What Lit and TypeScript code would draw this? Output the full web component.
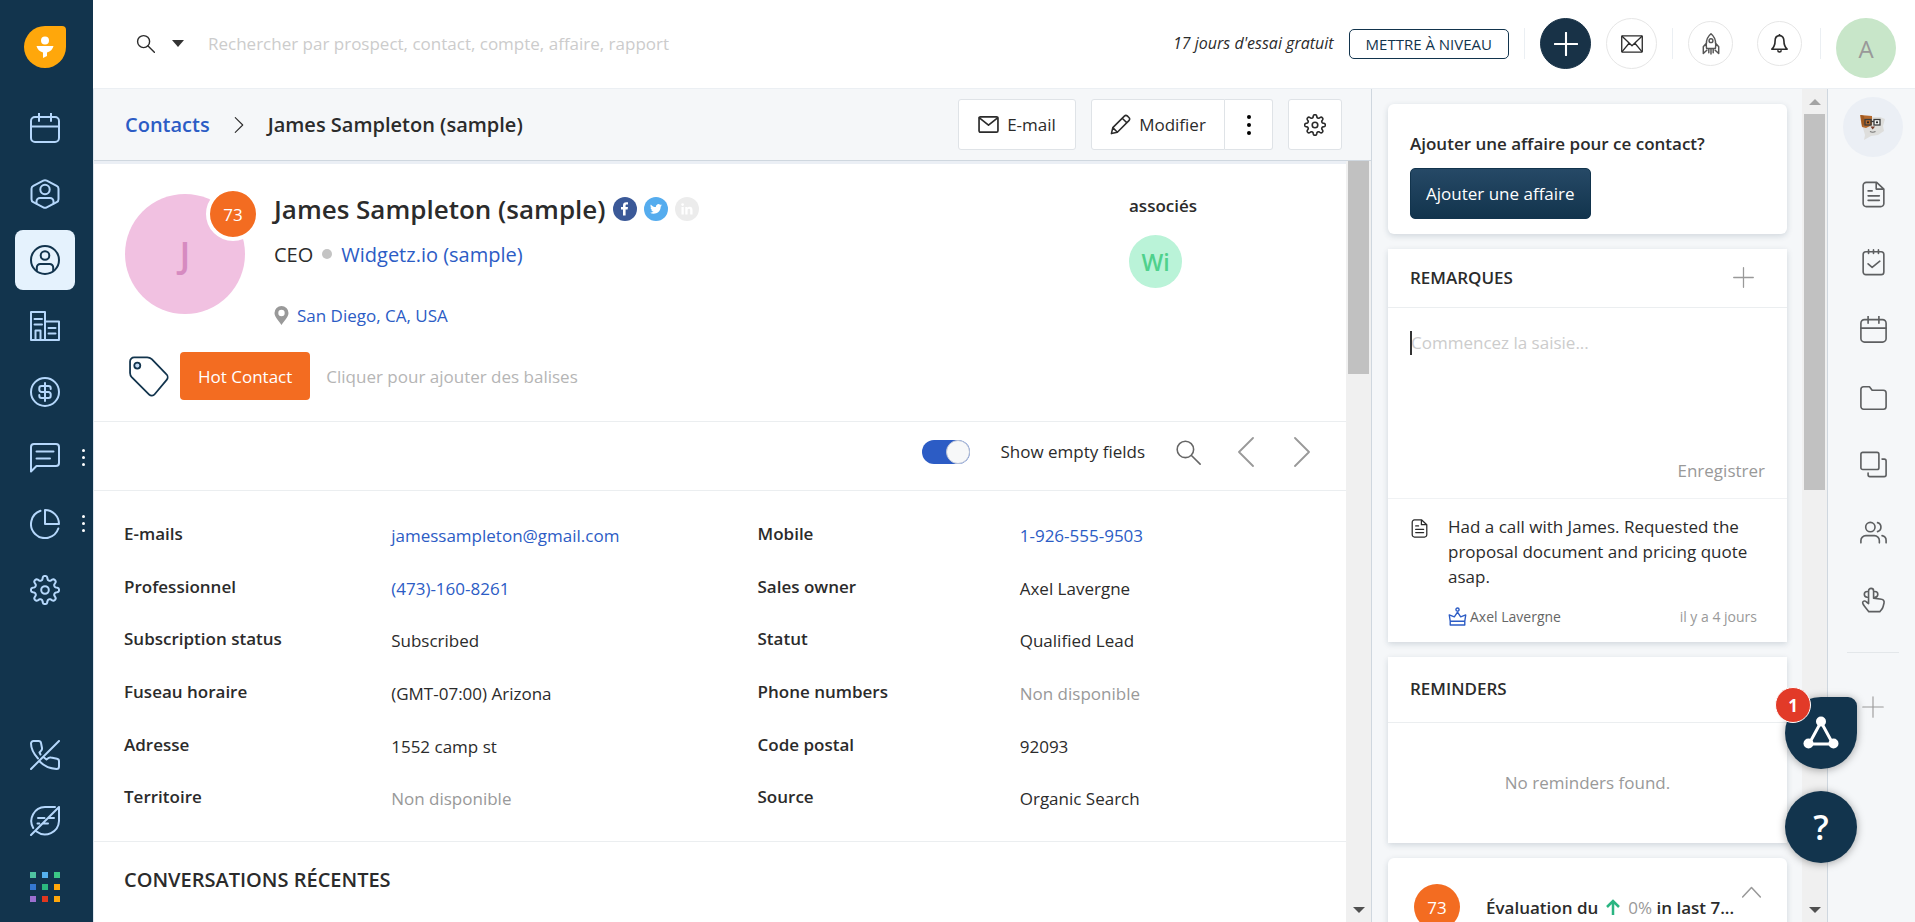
import { LitElement, html, svg, css, TemplateResult, SVGTemplateResult } from "lit";
import { customElement, state } from "lit/decorators.js";
import { classMap } from "lit/directives/class-map.js";

/* Eight-lobed cog outline on a 30 unit grid. */
function cogPath(mid: number, amp: number): string {
  const pts: string[] = [];
  for (let i = 0; i < 160; i++) {
    const t = (i / 160) * Math.PI * 2;
    const wave = Math.tanh(1.8 * Math.cos(8 * t)) / Math.tanh(1.8);
    const r = mid + amp * wave;
    pts.push(`${(15 + r * Math.sin(t)).toFixed(2)} ${(15 - r * Math.cos(t)).toFixed(2)}`);
  }
  return `M${pts.join("L")}Z`;
}

const COG = cogPath(12.1, 1.9);

const ICONS: Record<string, SVGTemplateResult> = {
  calendar: svg`<rect x="1" y="4" width="28" height="25" rx="4"/><path d="M1 13.500h28M9 0v8M21 0v8"/>`,
  lead: svg`<path d="M13.300 1.600a3.600 3.600 0 0 1 3.400 0l10 5.200a3.400 3.400 0 0 1 1.800 3v10.400a3.400 3.400 0 0 1-1.800 3l-10 5.200a3.600 3.600 0 0 1-3.400 0l-10-5.200a3.400 3.400 0 0 1-1.800-3V9.800a3.400 3.400 0 0 1 1.800-3z"/><circle cx="15" cy="10.500" r="4.700"/><path d="M6.500 24.500V22.500a3.500 3.500 0 0 1 3.500-3.500h10a3.500 3.500 0 0 1 3.500 3.500v2"/>`,
  contact: svg`<circle cx="15" cy="15" r="14"/><circle cx="15" cy="10.500" r="4.300"/><path d="M6.800 26v-3.500a3.500 3.500 0 0 1 3.500-3.500h9.400a3.500 3.500 0 0 1 3.500 3.500V26"/>`,
  account: svg`<path d="M1 29V1h14v28M15 10.500h14V29H1M4.500 8h7.500M4.500 13.500h7.500M5.500 29v-9.500h5V29M18.500 17h7M18.500 22.500h7"/>`,
  deal: svg`<circle cx="15" cy="15" r="14"/><path d="M15 6v18M20.700 12v-.700A2.300 2.300 0 0 0 18.400 9h-6.800a2.300 2.300 0 0 0-2.300 2.300v1.400A2.300 2.300 0 0 0 11.600 15h6.800a2.300 2.300 0 0 1 2.300 2.300v1.400a2.300 2.300 0 0 1-2.300 2.300h-6.800a2.300 2.300 0 0 1-2.300-2.300V18"/>`,
  chat: svg`<path d="M1 28.500V4a3 3 0 0 1 3-3h22a3 3 0 0 1 3 3v16a3 3 0 0 1-3 3H6.500zM6.500 8.500h17M6.500 15.500H20"/>`,
  pie: svg`<path d="M10.500 1.800A14 14 0 1 0 28.300 19.500M15 1v14h14A14 14 0 0 0 15 1z"/>`,
  cog: svg`<path d=${COG}/><circle cx="15" cy="15" r="3.800"/>`,
  phoneOff: svg`<path d="M1 29L29 1M8 18.500C3.500 13.500 1 8.500 1 3.500A2.500 2.500 0 0 1 3.500 1h5A2.500 2.500 0 0 1 11 3l1 5a3 3 0 0 1-1 2.800L9.500 12.500l1 2M14 17.500l2.500 2 2-1.500a3 3 0 0 1 2.500-.500l6 1.300a2.500 2.500 0 0 1 2 2.400v5.300A2.500 2.500 0 0 1 26.500 29C20 28.500 14 26 10 21.800"/>`,
  leafOff: svg`<path d="M1 29L29 1v14A14 14 0 0 1 6.500 25.500M25 1H15A14 14 0 0 0 3.200 22M8 12h6.500M19 12h5M7.500 17.500h1.800M12.500 17.500h5.500"/>`,
  note: svg`<path d="M7 1.500h11.500L26.500 9v16a3.500 3.500 0 0 1-3.500 3.500H7A3.500 3.500 0 0 1 3.500 25V5A3.500 3.500 0 0 1 7 1.500zM18 1.500V9h8.500M9 11h4.500M9 16.500h12.500M9 21.500h12.500"/>`,
  task: svg`<rect x="3.500" y="3" width="23" height="25.500" rx="3"/><path d="M9.500 1v4M15 1v4M20.500 1v4M9 16.500l4.500 4 8.500-7"/>`,
  folder: svg`<path d="M1 6a3 3 0 0 1 3-3h6.500l3 4H26a3 3 0 0 1 3 3v15a3 3 0 0 1-3 3H4a3 3 0 0 1-3-3z"/>`,
  copy: svg`<rect x="1" y="1.500" width="20" height="19" rx="2"/><path d="M24.500 9H27a2 2 0 0 1 2 2v15.500a2 2 0 0 1-2 2H11a2 2 0 0 1-2-2V24.500"/>`,
  people: svg`<circle cx="11.500" cy="9" r="5.200"/><path d="M1 26.500V24a5.500 5.500 0 0 1 5.500-5.500H16a5.500 5.500 0 0 1 5.500 5.500v2.500M19.500 4a5.200 5.200 0 0 1 0 10M24.500 18.500A5.500 5.500 0 0 1 29 24v2.500"/>`,
  touch: svg`<path d="M9.500 19.500V5.500a2.800 2.800 0 0 1 5.600 0v8l8.900 1.300a3.200 3.200 0 0 1 2.700 4l-1 4a8 8 0 0 1-2 3.700l-1.700 2H9.800L5 22.500c-1.800-2.300-2.600-4.300-1.500-5.300s2.700-.5 3.700.6zM8 6.100a3.200 3.200 0 1 0 0 6.400M16.600 6.100a3.200 3.200 0 1 1 0 6.400"/>`,
  search: svg`<circle cx="12" cy="12" r="9.500"/><path d="M19 19l10 10"/>`,
  mail: svg`<rect x="1.500" y="4" width="27" height="22" rx="2"/><path d="M2 5.500l13 10.500L28 5.500"/>`,
  letter: svg`<rect x="1" y="4" width="28" height="22" rx="1"/><path d="M1.500 4.500l13.500 13L28.500 4.500M1.500 25.500l9.500-11.500M28.500 25.500l-9.500-11.500"/>`,
  pencil: svg`<path d="M2 28l2-8.500L20.500 3a3.200 3.200 0 0 1 4.500 0l2 2a3.200 3.200 0 0 1 0 4.500L10.500 26zM17.500 6l6.500 6.500M4 19.500l6.500 6.500"/>`,
  rocket: svg`<path d="M9 21C7.500 12 10 5 15 1c5 4 7.500 11 6 20zM9 13.500l-4.500 5.300V28l4.800-4.500M21 13.500l4.500 5.300V28l-4.800-4.500M12 21.500V27M15 21.500V28.500M18 21.500V27"/><circle cx="15" cy="10.500" r="2.600"/>`,
  bell: svg`<path d="M15 2.500c-5 0-7 4-7 8.500 0 6-2 10-5 13h24c-3-3-5-7-5-13 0-4.500-2-8.500-7-8.500zM15 .500v2M12.500 26.500a2.500 2 0 0 0 5 0"/>`,
  plus: svg`<path d="M15 1v28M1 15h28"/>`,
  left: svg`<path d="M22 1L8 15l14 14"/>`,
  right: svg`<path d="M8 1l14 14L8 29"/>`,
  up: svg`<path d="M1 22L15 7l14 15"/>`,
  tag: svg`<path d="M1.500 4a3 3 0 0 1 3-3h9.500a5 5 0 0 1 3.400 1.300L28 13.300a3 3 0 0 1 .3 4.200L19.500 28a2.700 2.700 0 0 1-4 .2L2.700 15.400A4.500 4.500 0 0 1 1.500 12.400z"/><circle cx="6.800" cy="7" r="2.200" fill="#c5dcf5"/>`,
  crown: svg`<path d="M3.500 28.500v-6h23v6zM3.500 22.500L2 12.500l8 3L15 8l5 7.500 8-3-1.500 10"/><circle cx="15" cy="4" r="2.500"/>`,
};

function icon(name: string, size: number, weight = 2): TemplateResult {
  return html`<svg width=${size} height=${size} viewBox="0 0 30 30" fill="none" stroke="currentColor"
    stroke-width=${weight} stroke-linecap="round" stroke-linejoin="round" aria-hidden="true">${ICONS[name]}</svg>`;
}

interface Field {
  label: string;
  value: string;
  kind?: "link" | "empty";
}

const NAV = [
  { icon: "calendar", label: "Agenda" },
  { icon: "lead", label: "Prospects" },
  { icon: "contact", label: "Contacts", active: true },
  { icon: "account", label: "Comptes" },
  { icon: "deal", label: "Affaires" },
  { icon: "chat", label: "Conversations", more: true },
  { icon: "pie", label: "Rapports", more: true },
  { icon: "cog", label: "Configuration" },
];

const RAIL = ["note", "task", "calendar", "folder", "copy", "people", "touch"];

const APP_COLORS = [
  "#4fc3a1", "#55b1ee", "#3cc786",
  "#3578d0", "#2cb87f", "#ffa70b",
  "#9b6fd0", "#e0371f", "#ffa70b",
];

const FIELDS: Field[] = [
  { label: "E-mails", value: "jamessampleton@gmail.com", kind: "link" },
  { label: "Mobile", value: "1-926-555-9503", kind: "link" },
  { label: "Professionnel", value: "(473)-160-8261", kind: "link" },
  { label: "Sales owner", value: "Axel Lavergne" },
  { label: "Subscription status", value: "Subscribed" },
  { label: "Statut", value: "Qualified Lead" },
  { label: "Fuseau horaire", value: "(GMT-07:00) Arizona" },
  { label: "Phone numbers", value: "Non disponible", kind: "empty" },
  { label: "Adresse", value: "1552 camp st" },
  { label: "Code postal", value: "92093" },
  { label: "Territoire", value: "Non disponible", kind: "empty" },
  { label: "Source", value: "Organic Search" },
];

const shared = css`
  * { box-sizing: border-box; }
  svg { display: block; flex: none; }
  a { color: #2c5cc5; text-decoration: none; }
  button {
    font: inherit;
    color: inherit;
    background: none;
    border: 0;
    padding: 0;
    cursor: pointer;
  }
  h1, h2, p, dl, dt, dd { margin: 0; font-size: inherit; font-weight: inherit; }
`;

@customElement("side-nav")
export class SideNav extends LitElement {
  static styles = [shared, css`
    :host { display: flex; flex: none; width: 93px; background: #12344d; }
    nav { flex: 1; display: flex; flex-direction: column; align-items: center; padding: 26px 3px 5px 0; gap: 6px; color: #b5d7fb; }
    .logo { margin-bottom: 24px; }
    .item { position: relative; width: 60px; height: 60px; display: grid; place-items: center; color: inherit; border-radius: 8px; }
    .active { background: #e5f2fd; color: #12344d; }
    .spacer { flex: 1; }
    .more { position: absolute; right: -10px; top: 21px; display: grid; gap: 4px; }
    .more i { width: 3px; height: 3px; border-radius: 50%; background: #fff; }
  `];

  render() {
    return html`<nav aria-label="Principal">
      <svg class="logo" width="42" height="42" viewBox="0 0 42 42" aria-hidden="true">
        <path d="M21 0h17a4 4 0 0 1 4 4v17A21 21 0 1 1 21 0z" fill="#ffa70b"/>
        <circle cx="21" cy="14.500" r="4" fill="#fff"/>
        <path d="M12.500 20h17a9 9 0 0 1-6.500 6.500v3.500l-4 2v-5.500a9 9 0 0 1-6.500-6.500z" fill="#fff"/>
      </svg>
      ${NAV.map((n) => html`<a href="#" class=${classMap({ item: true, active: !!n.active })} aria-label=${n.label}>
        ${icon(n.icon, 30)}
        ${n.more ? html`<span class="more"><i></i><i></i><i></i></span>` : ""}
      </a>`)}
      <div class="spacer"></div>
      <a href="#" class="item" aria-label="Téléphone">${icon("phoneOff", 30)}</a>
      <a href="#" class="item" aria-label="Freddy">${icon("leafOff", 30)}</a>
      <a href="#" class="item" aria-label="Applications">
        <svg width="30" height="30" viewBox="0 0 30 30" aria-hidden="true">
          ${APP_COLORS.map((c, i) => svg`<rect x=${(i % 3) * 12} y=${Math.floor(i / 3) * 12} width="6" height="6" fill=${c}/>`)}
        </svg>
      </a>
    </nav>`;
  }
}

@customElement("top-bar")
export class TopBar extends LitElement {
  static styles = [shared, css`
    :host { display: flex; align-items: center; flex: none; height: 89px; padding: 0 19px 1px 43px; background: #fff; border-bottom: 1px solid #ebeff3; }
    .search { flex: 1; display: flex; align-items: center; }
    .caret { margin: 0 24px 0 17px; border: 6px solid transparent; border-top: 7px solid #333; border-bottom: 0; }
    input { flex: 1; min-width: 0; border: 0; outline: 0; padding: 0; height: 30px; font: inherit; font-size: 17px; background: none; }
    input::placeholder { color: #ccc; opacity: 1; }
    .trial { font-style: italic; font-size: 16px; line-height: 28px; padding-bottom: 2px; margin-right: 15px; }
    .upgrade { height: 30px; padding: 0 16px; border: 1px solid #12344d; border-radius: 5px; font-size: 15px; color: #12344d; }
    .rule { width: 1px; height: 31px; background: #ebeff3; margin: 0 15px; }
    .last { margin-left: 18px; }
    .round { width: 51px; height: 51px; border-radius: 50%; border: 1px solid #e6e6e6; display: grid; place-items: center; }
    .add { background: #183247; border-color: #183247; color: #fff; margin-right: 15px; }
    .small { width: 45px; height: 45px; }
    .rocket { color: #555; margin-right: 24px; }
    .avatar { width: 60px; height: 60px; border-radius: 50%; background: #c8e6c9; color: #999; font-size: 24px; display: grid; place-items: center; align-self: flex-start; margin-top: 18px; }
  `];

  render() {
    return html`
      <div class="search">
        ${icon("search", 19, 2.2)}
        <button class="caret" aria-label="Filtrer la recherche"></button>
        <input type="search" aria-label="Recherche" placeholder="Rechercher par prospect, contact, compte, affaire, rapport">
      </div>
      <span class="trial">17 jours d'essai gratuit</span>
      <button class="upgrade">METTRE À NIVEAU</button>
      <span class="rule"></span>
      <button class="round add" aria-label="Ajouter">${icon("plus", 24, 2.6)}</button>
      <button class="round" aria-label="E-mail">${icon("letter", 22, 1.8)}</button>
      <span class="rule"></span>
      <button class="round small rocket" aria-label="Nouveautés">${icon("rocket", 22, 2)}</button>
      <button class="round small" aria-label="Notifications">${icon("bell", 19, 2.6)}</button>
      <span class="rule last"></span>
      <button class="avatar" aria-label="Compte">A</button>`;
  }
}

@customElement("scroll-track")
export class ScrollTrack extends LitElement {
  static properties = { up: { type: Boolean }, share: { type: Number } };
  declare up: boolean;
  declare share: number;

  static styles = css`
    :host { display: flex; flex-direction: column; flex: none; width: 25px; background: #f0f0f0; padding: 0 2px; }
    .body { flex: 1; min-height: 0; }
    .thumb { background: #c1c1c1; }
    .arrow { height: 25px; display: grid; place-items: center; }
    .top { border: 6px solid transparent; border-bottom-color: #a3a3a3; border-top: 0; }
    .down { border: 6px solid transparent; border-top-color: #505050; border-bottom: 0; }
  `;

  render() {
    return html`
      ${this.up ? html`<div class="arrow"><span class="top"></span></div>` : ""}
      <div class="body"><div class="thumb" style="height:${this.share}%"></div></div>
      <div class="arrow"><span class="down"></span></div>`;
  }
}

@customElement("contact-view")
export class ContactView extends LitElement {
  @state() private showEmpty = true;

  static styles = [shared, css`
    :host { flex: 1; min-width: 0; display: flex; flex-direction: column; border-left: 1px solid #dfe7ef; border-right: 1px solid #cfd7df; background: #fff; }
    .crumbs { flex: none; height: 72px; display: flex; align-items: center; padding: 0 29px 0 31px; background: #f5f7f9; border-bottom: 1px solid #cfd7df; font-size: 20px; font-weight: 600; }
    .crumbs .sep { margin: 0 21px; }
    .crumbs .here { flex: 1; }
    .btn { height: 51px; display: flex; align-items: center; justify-content: center; gap: 8px; background: #fff; border: 1px solid #dfe3e7; border-radius: 3px; font-size: 17px; font-weight: 400; }
    .mailto { width: 118px; margin-right: 15px; }
    .edit { width: 134px; border-radius: 3px 0 0 3px; }
    .dots { width: 48px; border-left: 0; border-radius: 0 3px 3px 0; margin-right: 15px; }
    .gear { width: 54px; }
    .scroll { flex: 1; min-height: 0; display: flex; }
    .content { flex: 1; min-width: 0; overflow: hidden; border-top: 3px solid #ebeff5; }
    .profile { display: grid; grid-template-columns: 149px 1fr 217px; padding: 30px 0 0 31px; height: 188px; }
    .face { position: relative; width: 120px; height: 120px; border-radius: 50%; background: #f1c1e1; display: grid; place-items: center; color: #d68bc0; font-size: 36px; font-weight: 600; }
    .score { position: absolute; right: -15px; top: -7px; width: 54px; height: 54px; border-radius: 50%; border: 4px solid #fff; background: #f36c21; color: #fff; font-size: 17px; font-weight: 400; display: grid; place-items: center; }
    .name { display: flex; align-items: center; gap: 7px; height: 30px; font-size: 26px; font-weight: 600; }
    .job { display: flex; align-items: center; gap: 9px; height: 30px; margin-top: 15px; font-size: 20px; }
    .job i { width: 10px; height: 10px; border-radius: 50%; background: #c4c4c4; }
    .place { display: flex; align-items: center; gap: 8px; height: 30px; margin-top: 31px; font-size: 17px; }
    .linked { font-size: 17px; font-weight: 600; line-height: 24px; }
    .linked .wi { width: 53px; height: 53px; margin-top: 17px; border-radius: 50%; background: #baf3d8; color: #4fd18c; font-size: 23px; display: grid; place-items: center; }
    .tags { display: flex; align-items: center; padding: 0 0 21px 34px; height: 70px; border-bottom: 1px solid #ebeef0; font-size: 17px; color: #b5b5b5; }
    .tags svg { color: #12344d; margin-right: 11px; }
    .hot { height: 48px; display: flex; align-items: center; padding: 0 18px; border-radius: 4px; background: #f36c21; color: #fff; margin-right: 16px; }
    .tools { display: flex; align-items: center; justify-content: flex-end; height: 69px; padding: 0 29px 9px 0; border-bottom: 1px solid #ebeef0; font-size: 17px; }
    .toggle { appearance: none; width: 48px; height: 24px; margin: 0 30px 0 0; border-radius: 12px; background: #2c5cc5; position: relative; }
    .toggle::after { content: ""; position: absolute; top: 0; right: 0; width: 24px; height: 24px; border-radius: 50%; background: #f7f8f9; border: 1px solid #bcc4d6; box-sizing: border-box; }
    .toggle:not(:checked) { background: #cfd7df; }
    .toggle:not(:checked)::after { right: 24px; }
    .tools label { margin-right: 30px; }
    .tools button { color: #999; }
    .tools .find { color: #666; margin-right: 30px; }
    .tools .prev { margin-right: 26px; }
    .fields { display: grid; grid-template-columns: 267fr 366fr 262fr 326fr; grid-auto-rows: 1fr; height: 351px; padding: 30px 0 4px 30px; border-bottom: 1px solid #ebeef0; font-size: 17px; line-height: 26px; }
    .fields dt { font-weight: 600; }
    .fields dd { padding-top: 2px; }
    .empty { color: #999; }
    .recent { padding: 22px 0 0 30px; font-size: 20px; line-height: 32px; font-weight: 600; }
  `];

  private toggle() {
    this.showEmpty = !this.showEmpty;
  }

  private field(f: Field) {
    return html`<dt>${f.label}</dt>
      <dd class=${classMap({ empty: f.kind === "empty" })}>${f.kind === "link" ? html`<a href="#">${f.value}</a>` : f.value}</dd>`;
  }

  render() {
    return html`
      <header class="crumbs">
        <a href="#">Contacts</a>
        <span class="sep">${icon("right", 16, 2)}</span>
        <span class="here">James Sampleton (sample)</span>
        <button class="btn mailto">${icon("mail", 21, 2.4)} E-mail</button>
        <button class="btn edit">${icon("pencil", 21, 2.2)} Modifier</button>
        <button class="btn dots" aria-label="Plus">
          <svg width="4" height="22" viewBox="0 0 4 22" aria-hidden="true"><circle cx="2" cy="3" r="2"/><circle cx="2" cy="11" r="2"/><circle cx="2" cy="19" r="2"/></svg>
        </button>
        <button class="btn gear" aria-label="Personnaliser">${icon("cog", 22, 2.2)}</button>
      </header>
      <div class="scroll">
        <div class="content">
          <section class="profile">
            <div><div class="face">J<span class="score">73</span></div></div>
            <div>
              <h1 class="name">James Sampleton (sample)
                <svg width="24" height="24" viewBox="0 0 24 24" aria-label="Facebook"><circle cx="12" cy="12" r="12" fill="#3b5998"/><path d="M10 18.500v-6H8v-2.400h2V8.500C10 6.300 11.200 5.200 13.200 5.200c.9 0 1.500.1 1.800.1v2.200h-1.200c-1 0-1.200.5-1.200 1.200v1.400H15l-.4 2.400h-2v6z" fill="#fff"/></svg>
                <svg width="24" height="24" viewBox="0 0 24 24" aria-label="Twitter"><circle cx="12" cy="12" r="12" fill="#55acee"/><path d="M18 8.200c-.4.2-.9.300-1.400.4.500-.3.900-.8 1.100-1.400-.5.300-1 .5-1.600.6a2.500 2.500 0 0 0-4.200 2.300c-2-.1-3.900-1.100-5.100-2.700-.7 1.200-.3 2.600.8 3.300-.4 0-.8-.1-1.100-.3 0 1.200.8 2.200 2 2.500-.4.100-.7.100-1.100 0 .3 1 1.200 1.700 2.300 1.700A5 5 0 0 1 6 15.700c3.800 2.400 10.600.7 10.700-6.100.5-.4 1-.9 1.300-1.400z" fill="#fff"/></svg>
                <svg width="24" height="24" viewBox="0 0 24 24" aria-label="LinkedIn"><circle cx="12" cy="12" r="12" fill="#ececec"/><path d="M6.500 10h2.300v7.500H6.500zM10.300 10h2.200v1c.4-.7 1.200-1.200 2.300-1.200 2.100 0 2.700 1.400 2.700 3.300v4.400h-2.300v-4c0-1-.1-1.800-1.200-1.800s-1.400.8-1.400 1.800v4h-2.300z" fill="#fff"/><circle cx="7.600" cy="7.600" r="1.300" fill="#fff"/></svg>
              </h1>
              <p class="job">CEO <i></i> <a href="#">Widgetz.io (sample)</a></p>
              <p class="place">
                <svg width="15" height="19" viewBox="0 0 15 19" aria-hidden="true"><path d="M7.500 0A7 7 0 0 1 14.500 7c0 4-4.500 8-7 12C5 15 .5 11 .5 7a7 7 0 0 1 7-7zm0 3.800a3.200 3.200 0 1 0 0 6.400 3.200 3.200 0 0 0 0-6.400z" fill="#999"/></svg>
                <a href="#">San Diego, CA, USA</a>
              </p>
            </div>
            <div class="linked">associés<div class="wi">Wi</div></div>
          </section>
          <div class="tags">
            ${icon("tag", 41, 1.300)}
            <span class="hot">Hot Contact</span>
            <span>Cliquer pour ajouter des balises</span>
          </div>
          <div class="tools">
            <input id="empty" class="toggle" type="checkbox" .checked=${this.showEmpty} @change=${this.toggle}>
            <label for="empty">Show empty fields</label>
            <button class="find" aria-label="Chercher">${icon("search", 26, 1.8)}</button>
            <button class="prev" aria-label="Précédent">${icon("left", 30, 1.8)}</button>
            <button aria-label="Suivant">${icon("right", 30, 1.8)}</button>
          </div>
          <dl class="fields">${FIELDS.map((f) => this.field(f))}</dl>
          <h2 class="recent">CONVERSATIONS RÉCENTES</h2>
        </div>
        <scroll-track share="29"></scroll-track>
      </div>`;
  }
}

@customElement("activity-panel")
export class ActivityPanel extends LitElement {
  static styles = [shared, css`
    :host { flex: none; display: flex; width: 456px; border-right: 1px solid #cfd7df; background: #f5f7f9; font-size: 17px; overflow: hidden; }
    .cards { flex: 1; min-width: 0; display: flex; flex-direction: column; gap: 15px; padding: 15px 15px 0 16px; overflow: hidden; }
    .card { flex: none; background: #fff; box-shadow: 0 2px 6px rgba(18, 52, 77, 0.16); }
    .soft { border-radius: 6px; }
    .deal { padding: 27px 22px 15px; font-weight: 600; line-height: 26px; }
    .primary { display: block; height: 51px; margin-top: 11px; padding: 0 15px; border: 1px solid #12344d; border-radius: 5px; background: linear-gradient(#264966, #12344d); color: #fff; font-weight: 400; }
    .head { display: flex; align-items: center; justify-content: space-between; height: 59px; padding: 0 33px 2px 22px; border-bottom: 1px solid #ebeef0; font-weight: 600; }
    .head button { color: #999; }
    .tall { height: 66px; }
    .compose { position: relative; height: 191px; padding: 20px 22px 12px; display: flex; flex-direction: column; border-bottom: 1px solid #f0f2f4; }
    textarea { flex: 1; border: 0; outline: 0; padding: 0 0 0 1px; resize: none; font: inherit; line-height: 30px; background: none; }
    textarea::placeholder { color: #ccc; opacity: 1; }
    .caret { position: absolute; left: 22px; top: 23px; width: 2px; height: 24px; background: #333; }
    .save { align-self: flex-end; line-height: 30px; color: #999; }
    .entry { display: grid; grid-template-columns: 38px 1fr; padding: 15px 30px 13px 22px; line-height: 25px; }
    .entry .doc { padding-top: 5px; }
    .meta { display: flex; align-items: center; justify-content: space-between; height: 26px; margin-top: 14px; font-size: 14px; color: #999; }
    .by { display: flex; align-items: center; gap: 3px; color: #666; }
    .by svg { color: #2c5cc5; }
    .none { height: 120px; padding-bottom: 2px; display: grid; place-items: center; color: #999; }
    .rate { display: flex; align-items: center; height: 98px; padding: 0 26px; font-weight: 600; }
    .rate .num { width: 46px; height: 46px; margin-right: 26px; border-radius: 50%; background: #f36c21; color: #fff; font-weight: 400; display: grid; place-items: center; }
    .rate .text { flex: 1; display: flex; align-items: center; gap: 8px; white-space: nowrap; }
    .pct { color: #999; font-weight: 400; }
    .fold { align-self: flex-start; margin-top: 25px; color: #999; }
  `];

  render() {
    return html`
      <div class="cards">
        <section class="card soft deal">
          <p>Ajouter une affaire pour ce contact?</p>
          <button class="primary">Ajouter une affaire</button>
        </section>
        <section class="card">
          <div class="head"><h2>REMARQUES</h2><button aria-label="Ajouter une remarque">${icon("plus", 21, 1.8)}</button></div>
          <div class="compose">
            <textarea aria-label="Remarque" placeholder="Commencez la saisie..."></textarea>
            <span class="caret"></span>
            <button class="save">Enregistrer</button>
          </div>
          <div class="entry">
            <span class="doc">${icon("note", 19, 2)}</span>
            <div>
              <p>Had a call with James. Requested the proposal document and pricing quote asap.</p>
              <div class="meta"><span class="by">${icon("crown", 19, 2.2)} Axel Lavergne</span><span>il y a 4 jours</span></div>
            </div>
          </div>
        </section>
        <section class="card">
          <div class="head tall"><h2>REMINDERS</h2></div>
          <p class="none">No reminders found.</p>
        </section>
        <section class="card soft rate">
          <span class="num">73</span>
          <span class="text">Évaluation du
            <svg width="14" height="16" viewBox="0 0 14 16" fill="none" stroke="#2bb582" stroke-width="2.500" aria-hidden="true"><path d="M7 16V2M1 8l6-6 6 6"/></svg>
            <span><span class="pct">0%</span> in last 7...</span>
          </span>
          <button class="fold" aria-label="Réduire">${icon("up", 19, 2.4)}</button>
        </section>
      </div>
      <scroll-track up share="48"></scroll-track>`;
  }
}

@customElement("tool-rail")
export class ToolRail extends LitElement {
  static styles = [shared, css`
    :host { flex: none; width: 87px; display: flex; flex-direction: column; align-items: center; padding: 8px 0 0 3px; background: #f5f7f9; color: #5d5f61; }
    .stack { display: flex; flex-direction: column; justify-content: space-between; height: 533px; }
    button { width: 60px; height: 60px; display: grid; place-items: center; border-radius: 50%; }
    .dog { background: #ebeff5; }
    hr { width: 52px; height: 1px; border: 0; margin: 22px 0 24px; background: #e3e7ea; }
    .plus { color: #999; }
  `];

  render() {
    return html`
      <div class="stack">
        <button class="dog" aria-label="Assistant">
          <svg width="26" height="26" viewBox="0 0 26 26" aria-hidden="true">
            <path d="M6 3h14l5 2-2 7 1 5-6 4-7 1-7 4 1-5-2-7z" fill="#dededc"/>
            <path d="M0 1l12 1v9l-6 3-4-1z" fill="#b5692c"/><path d="M1 1l3 1 1 8-3 2z" fill="#a0591f"/>
            <g fill="none" stroke="#3c3c3c" stroke-width="1.300"><rect x="5" y="5.500" width="6" height="5.500"/><rect x="14" y="5.500" width="6" height="5.500" fill="#f4f4f4"/><path d="M11 7.500h3"/></g>
            <circle cx="8" cy="8.300" r="1.100" fill="#222"/><circle cx="17" cy="8.300" r="1.100" fill="#222"/>
            <path d="M10.500 12.500h4.500L12.700 15.500z" fill="#7a3b28"/><path d="M10 17.500q2.700 1.500 5.500 0" fill="none" stroke="#777" stroke-width="1.200"/>
          </svg>
        </button>
        ${RAIL.map((name) => html`<button aria-label=${name}>${icon(name, 27, 1.8)}</button>`)}
      </div>
      <hr>
      <button class="plus" aria-label="Ajouter">${icon("plus", 22, 1.5)}</button>`;
  }
}

@customElement("app-root")
export class AppRoot extends LitElement {
  static styles = [shared, css`
    :host { display: flex; position: relative; height: 100vh; overflow: hidden; font-family: "Open Sans", "Noto Sans", sans-serif; font-size: 17px; color: #2b2b2b; background: #fff; }
    .page { flex: 1; min-width: 0; display: flex; flex-direction: column; }
    .body { flex: 1; min-height: 0; display: flex; }
    .float { position: absolute; right: 58px; bottom: 59px; display: grid; gap: 22px; }
    .fab { position: relative; width: 72px; height: 72px; border-radius: 50%; background: #12344d; color: #fff; display: grid; place-items: center; box-shadow: 0 1px 8px rgba(0, 0, 0, 0.35); }
    .share { border-top-right-radius: 9px; }
    .count { position: absolute; left: -10px; top: -10px; width: 36px; height: 36px; border-radius: 50%; border: 1px solid #fff; background: #e23a28; color: #fff; font-size: 17px; font-weight: 700; display: grid; place-items: center; }
    .help { font-size: 34px; font-weight: 600; }
  `];

  render() {
    return html`
      <side-nav></side-nav>
      <div class="page">
        <top-bar></top-bar>
        <div class="body">
          <contact-view></contact-view>
          <activity-panel></activity-panel>
          <tool-rail></tool-rail>
        </div>
      </div>
      <div class="float">
        <button class="fab share" aria-label="Notifications">
          <svg width="36" height="34" viewBox="0 0 36 34" aria-hidden="true">
            <path d="M18 6L6 28h24z" fill="none" stroke="#fff" stroke-width="3"/>
            <circle cx="18" cy="5.500" r="5" fill="#fff"/><circle cx="5.500" cy="27.500" r="5" fill="#fff"/><circle cx="30.500" cy="27.500" r="5" fill="#fff"/>
          </svg>
          <span class="count">1</span>
        </button>
        <button class="fab help" aria-label="Aide">?</button>
      </div>`;
  }
}
